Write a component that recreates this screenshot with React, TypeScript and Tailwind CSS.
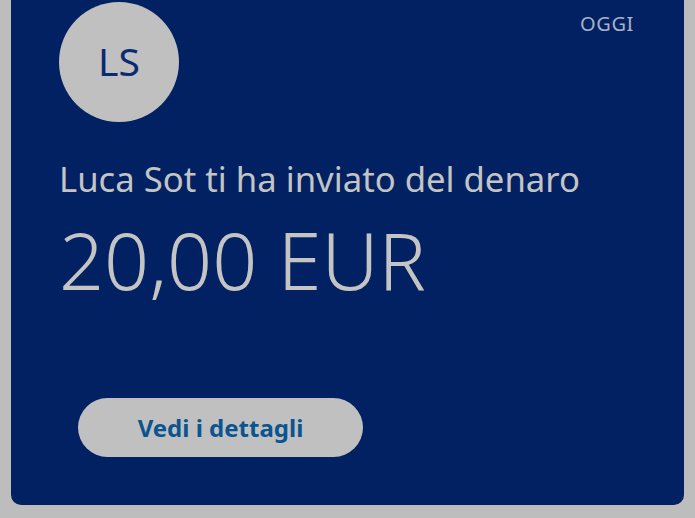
import React from "react";

type MoneyReceivedCardProps = {
  initials: string;
  sender: string;
  amount: string;
  dateLabel: string;
};

function MoneyReceivedCard({ initials, sender, amount, dateLabel }: MoneyReceivedCardProps) {
  return (
    <div className="mx-[11px] h-[505px] rounded-b-[10px] bg-[#012163] relative">
      {/* Date label */}
      <span className="absolute right-[50px] top-[9px] text-[20px] tracking-[0.6px] text-[#a9b1c6]">
        {dateLabel}
      </span>

      <div className="pl-[48px] pt-[2px]">
        {/* Sender avatar */}
        <div className="flex items-center justify-center w-[120px] h-[120px] rounded-full bg-[#c0c0c0]">
          <span className="text-[39px] text-[#0b2a72] leading-none -mt-[4px]">{initials}</span>
        </div>

        <p className="mt-[36px] text-[34.7px] leading-[42px] text-[#c4c4c4]">
          {sender} ti ha inviato del denaro
        </p>
        <p className="mt-[14px] text-[79px] leading-[92px] font-light text-[#c4c4c4]">
          {amount}
        </p>

        <button className="mt-[92px] ml-[19px] w-[285px] h-[59px] rounded-full bg-[#c0c0c0] text-[24px] font-bold text-[#0a5590]">
          Vedi i dettagli
        </button>
      </div>
    </div>
  );
}

export default function App() {
  return (
    <div
      className="w-[695px] h-[518px] bg-[#bdbdbd] overflow-hidden"
      style={{ fontFamily: '"Noto Sans", "Open Sans", sans-serif' }}
    >
      <MoneyReceivedCard initials="LS" sender="Luca Sot" amount="20,00 EUR" dateLabel="OGGI" />
    </div>
  );
}
